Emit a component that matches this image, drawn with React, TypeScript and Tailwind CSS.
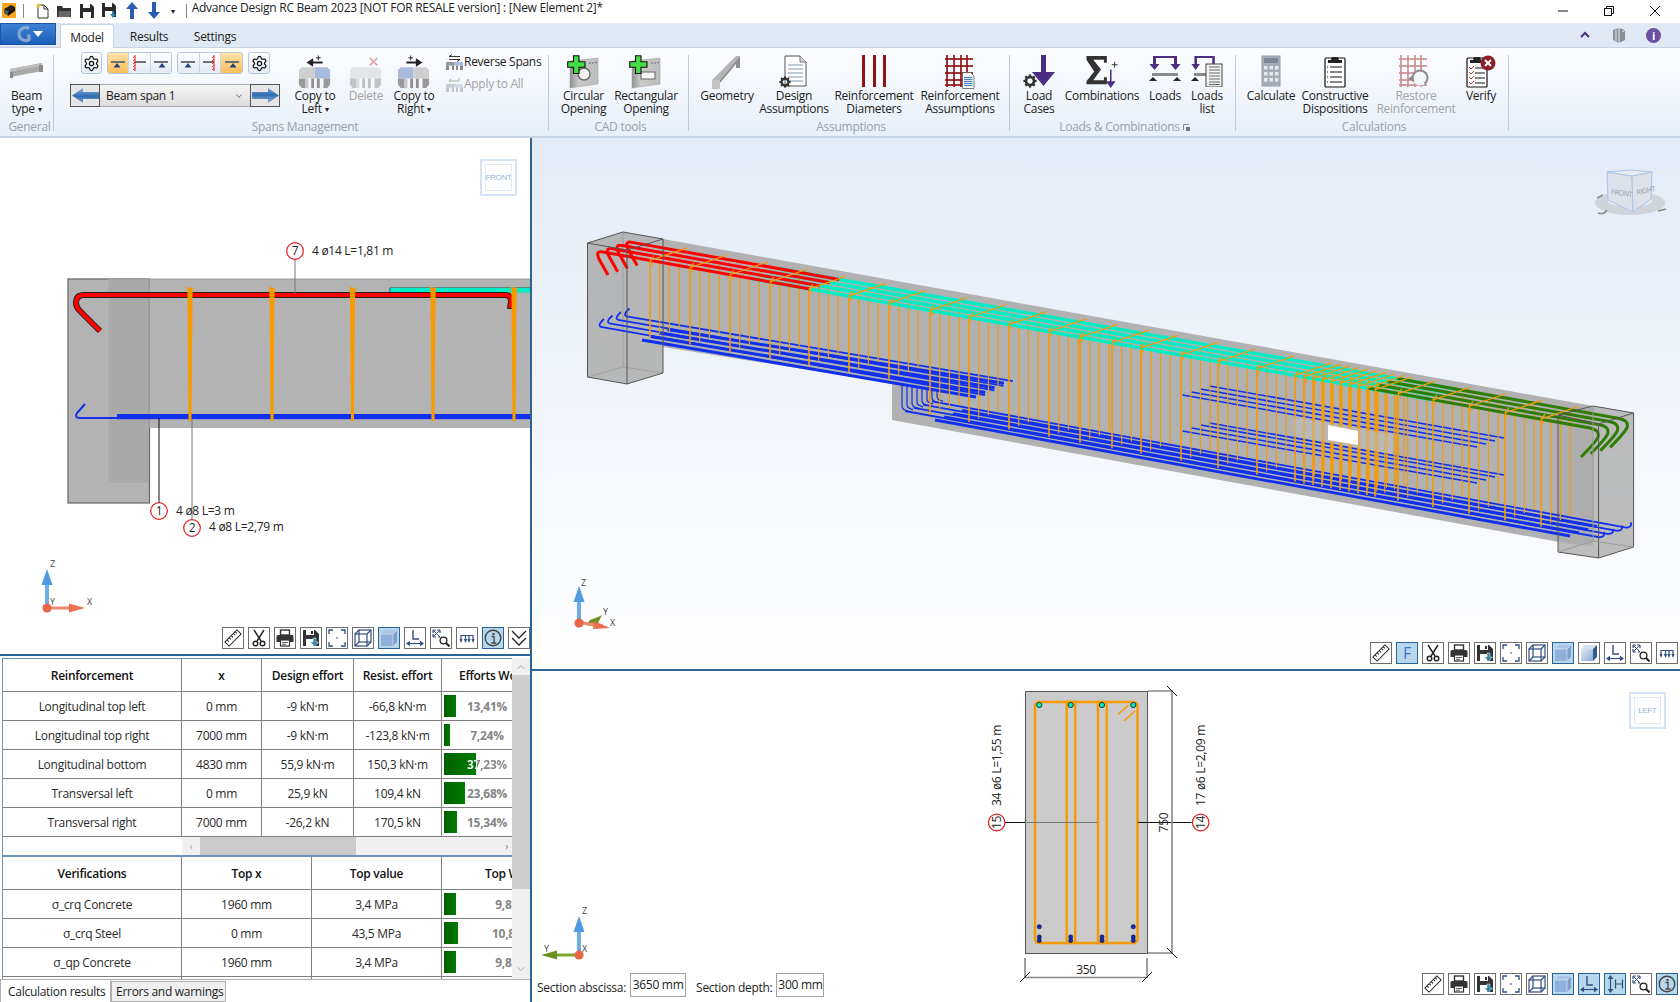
import React from "react";
import { Settings, ChevronDown } from "lucide-react";

const ORANGE = "#f79a00";
const BLUE = "#1030ee";
const CYAN = "#00ecc4";
const GREEN = "#2e7d00";
const PURPLE = "#4b2e83";

/* ---------- small ribbon icons ---------- */
const TableTop = ({ left, right }: { left: string; right: string }) => (
  <g>
    <polygon points="3,13 16.5,13 16.5,25 0,25 0,16" fill={left} />
    <polygon points="16.5,13 30,13 33,16 33,25 16.5,25" fill={right} />
    <polygon points="0,25 7,25 7,35 3,35 0,31" fill="#9a9a9a" />
    <rect x="7" y="25" width="3" height="10" fill="#c9c9c9" />
    <rect x="13" y="25" width="3" height="10" fill="#8f8f8f" />
    <rect x="19" y="25" width="3" height="10" fill="#8f8f8f" />
    <polygon points="26,25 33,25 33,31 30,35 26,35" fill="#9a9a9a" />
  </g>
);
const CopyLeft = () => (
  <svg width="34" height="34" viewBox="0 0 34 36">
    <polygon points="8,8 15,3.5 15,7 25,7 25,9 15,9 15,12.5" fill="#222" />
    <path d="M18 3h5M20.5 .5v5" stroke="#222" strokeWidth="1" />
    <TableTop left="#cfcfcf" right="#a9bbdd" />
  </svg>
);
const CopyRight = () => (
  <svg width="34" height="34" viewBox="0 0 34 36">
    <polygon points="26,8 19,3.5 19,7 9,7 9,9 19,9 19,12.5" fill="#222" />
    <path d="M11 3h5M13.5 .5v5" stroke="#222" strokeWidth="1" />
    <TableTop left="#a9bbdd" right="#cfcfcf" />
  </svg>
);
const DeleteSpan = () => (
  <svg width="34" height="34" viewBox="0 0 34 36" opacity="0.55">
    <path d="M21 3l8 8M29 3l-8 8" stroke="#c07070" strokeWidth="2" />
    <TableTop left="#d4d4d4" right="#d4d4d4" />
  </svg>
);
const Opening = ({ rect }: { rect?: boolean }) => (
  <svg width="34" height="34" viewBox="0 0 34 34">
    <defs>
      <linearGradient id="wall" x1="0" y1="0" x2="1" y2="0">
        <stop offset="0" stopColor="#8f8f8f" />
        <stop offset="0.3" stopColor="#c9c9c9" />
        <stop offset="1" stopColor="#bdbdbd" />
      </linearGradient>
    </defs>
    <polygon points="3,6 31,3 31,29 3,33" fill="url(#wall)" stroke="#9a9a9a" strokeWidth="0.5" />
    {rect ? (
      <rect x="12" y="17" width="14" height="7" fill="#f4f4f4" stroke="#666" strokeWidth="1" />
    ) : (
      <circle cx="17" cy="19" r="6" fill="#f4f4f4" stroke="#666" strokeWidth="1.4" />
    )}
    <circle cx="23" cy="8" r="0.8" fill="#666" />
    <circle cx="26" cy="8" r="0.8" fill="#666" />
    <circle cx="29" cy="7.5" r="0.8" fill="#666" />
    <path d="M6.5 .7h5.5v6h6v5.6h-6v6.2H6.5v-6.2H.7V6.7h5.8z" fill="#44dd44" stroke="#111" strokeWidth="1.1" />
  </svg>
);
const Geometry = () => (
  <svg width="30" height="34" viewBox="0 0 30 34">
    <polygon points="0,25 24,1 28,1 8,25" fill="#b5b5b5" />
    <polygon points="8,25 28,1 28,13 24,13 24,9 8,28" fill="#8f8f8f" />
    <polygon points="0,25 8,25 8,34 0,34" fill="#c2c2c2" />
  </svg>
);
const DocLines = ({ x = 0 }: { x?: number }) => (
  <g transform={`translate(${x} 0)`}>
    <path d="M5 1h15l6 6v24H5z" fill="#fff" stroke="#555" strokeWidth="1" />
    <path d="M20 1v6h6" fill="#ddd" stroke="#555" strokeWidth="0.8" />
    {[10, 14, 18, 22, 26].map((y) => (
      <path key={y} d={`M8 ${y}h15`} stroke="#7c93ad" strokeWidth="1" />
    ))}
  </g>
);
const Cog = ({ x, y, s = 1 }: { x: number; y: number; s?: number }) => (
  <g transform={`translate(${x} ${y}) scale(${s})`}>
    <circle r="4" fill="none" stroke="#333" strokeWidth="2.6" />
    {[0, 45, 90, 135, 180, 225, 270, 315].map((a) => (
      <rect key={a} x="-1.2" y="-6.6" width="2.4" height="3" fill="#333" transform={`rotate(${a})`} />
    ))}
  </g>
);
const DesignA = () => (
  <svg width="30" height="34" viewBox="0 0 30 34">
    <g transform="translate(1 0)">
      <DocLines />
    </g>
    <Cog x={6} y={27} s={0.85} />
  </svg>
);
const Diameters = () => (
  <svg width="26" height="32" viewBox="0 0 26 32">
    <rect x="1" y="0" width="3" height="32" fill="#8f1515" />
    <rect x="12" y="0" width="3" height="32" fill="#8f1515" />
    <rect x="22" y="0" width="3" height="32" fill="#8f1515" />
  </svg>
);
const RGrid = ({ c = "#8f1515" }: { c?: string }) => (
  <g stroke={c} strokeWidth="1.7">
    {[2, 9, 16, 22].map((x) => (
      <path key={x} d={`M${x} 0v32`} />
    ))}
    {[4, 11, 18, 25, 30].map((y) => (
      <path key={y} d={`M0 ${y}h28`} />
    ))}
  </g>
);
const RAssum = () => (
  <svg width="30" height="34" viewBox="0 0 30 34">
    <RGrid />
    <g transform="translate(17 17) scale(.5)">
      <path d="M1 1h16l7 7v25H1z" fill="#fff" stroke="#555" strokeWidth="1.6" />
      {[11, 15, 19, 23, 27].map((y) => (
        <path key={y} d={`M4 ${y}h17`} stroke="#4a80b8" strokeWidth="2.4" />
      ))}
    </g>
  </svg>
);
const LoadCases = () => (
  <svg width="34" height="34" viewBox="0 0 34 34">
    <path d="M19 0h5v17h9L21.5 31 10 17h9z" fill={PURPLE} />
    <Cog x={8} y={26} s={1} />
  </svg>
);
const Combos = () => (
  <svg width="34" height="35" viewBox="0 0 34 36">
    <path d="M1 1h21v7h-3V5H8l8 10-8 11h11v-3h3v7H1v-3l8-10L1 5z" fill="#333" />
    <path d="M27 10h6M30 7v6" stroke="#333" strokeWidth="1" />
    <path d="M26 15v15" stroke={PURPLE} strokeWidth="1.6" />
    <path d="M21 27h10l-5 7z" fill={PURPLE} />
  </svg>
);
const LoadFrame = ({ dx = 0 }: { dx?: number }) => (
  <g transform={`translate(${dx} 0)`} fill={PURPLE}>
    <path d="M5 1h22v2H5z" />
    <path d="M4 1h3v9H4zM25 1h3v9h-3z" />
    <path d="M.5 9h10l-5 6zM21.5 9h10l-5 6z" />
  </g>
);
const Loads = () => (
  <svg width="32" height="32" viewBox="0 0 32 32">
    <LoadFrame />
    <rect x="3" y="18" width="26" height="3" fill="#8a8a8a" />
    <path d="M0 26l4-4 4 4zM24 26l4-4 4 4z" fill="#222" />
  </svg>
);
const LoadsList = () => (
  <svg width="32" height="32" viewBox="0 0 32 32">
    <g transform="scale(.85 1)">
      <LoadFrame />
    </g>
    <rect x="3" y="18" width="14" height="3" fill="#8a8a8a" />
    <path d="M0 26l4-4 4 4z" fill="#222" />
    <rect x="15" y="9" width="16" height="23" fill="#f4f4f4" stroke="#444" />
    {[12, 15, 18, 21, 24, 27, 29.5].map((y) => (
      <path key={y} d={`M18 ${y}h11`} stroke="#666" strokeWidth="1" />
    ))}
  </svg>
);
const Calc = () => (
  <svg width="20" height="32" viewBox="0 0 20 32">
    <rect x="1" y="1" width="18" height="30" fill="#a7adb5" stroke="#96a0ac" />
    <rect x="3" y="3" width="14" height="5" fill="#7d8895" />
    {[11, 17, 23].flatMap((y) =>
      [3, 8.5, 14].map((x) => <rect key={`${x}-${y}`} x={x} y={y} width="3.5" height="3.5" fill="#e5e8ee" />)
    )}
  </svg>
);
const Clip = ({ children }: { children?: React.ReactNode }) => (
  <g>
    <rect x="1" y="3" width="20" height="29" rx="1" fill="#fff" stroke="#111" strokeWidth="1.2" />
    <path d="M4 8V5h3l1-3h6l1 3h3v3z" fill="#222" />
    {children}
  </g>
);
const Constructive = () => (
  <svg width="22" height="33" viewBox="0 0 22 33">
    <Clip>
      {[12, 17, 22, 27].map((y) => (
        <path key={y} d={`M6 ${y}h12M3 ${y}h1`} stroke="#111" strokeWidth="1" />
      ))}
    </Clip>
  </svg>
);
const Restore = () => (
  <svg width="34" height="34" viewBox="0 0 34 34">
    <g opacity="0.55">
      <RGrid c="#a33a3a" />
    </g>
    <circle cx="21" cy="23" r="7.5" fill="#f2f5fa" stroke="#8a8a8a" strokeWidth="2" strokeDasharray="34 13" transform="rotate(150 21 23)" />
    <path d="M9 24l5-4 1 6z" fill="#8a8a8a" />
  </svg>
);
const Verify = () => (
  <svg width="30" height="33" viewBox="0 0 30 33">
    <Clip>
      {[13, 18, 23, 28].map((y) => (
        <g key={y}>
          <path d={`M9 ${y}h10`} stroke="#111" strokeWidth="1" />
          <path d={`M3 ${y - 1}l2 2 3-3`} stroke="#c03030" strokeWidth="1" fill="none" />
        </g>
      ))}
    </Clip>
    <circle cx="22" cy="8" r="7.5" fill="#8a1f28" />
    <path d="M19 5l6 6M25 5l-6 6" stroke="#fff" strokeWidth="2" />
  </svg>
);
const BeamType = () => (
  <svg width="34" height="16" viewBox="0 0 34 16">
    <polygon points="0,6 32,0 32,8 1,14" fill="#a8a8a8" />
    <polygon points="0,6 32,0 32,3 0,9" fill="#bcbcbc" />
    <polygon points="0,9 3,9 3,15 0,15" fill="#8a8a8a" />
    <polygon points="29,2 33,2 33,9 29,9" fill="#8a8a8a" />
  </svg>
);
const MiniTable = ({ top, op = 1 }: { top: React.ReactNode; op?: number }) => (
  <svg width="17" height="16" viewBox="0 0 17 16" opacity={op}>
    {top}
    <rect x="0" y="8" width="17" height="3.5" fill="#a9bbdd" />
    <rect x="0" y="8" width="8" height="3.5" fill="#999" />
    <rect x="0" y="11.5" width="3" height="4.5" fill="#888" />
    <rect x="6" y="11.5" width="2" height="4.5" fill="#888" />
    <rect x="10" y="11.5" width="2" height="4.5" fill="#888" />
    <rect x="14" y="11.5" width="3" height="4.5" fill="#888" />
  </svg>
);

/* ---------- spans toolbar ---------- */
const SpanGlyph = ({ t, hatch }: { t?: number; hatch?: number }) => (
  <svg width="18" height="16" viewBox="0 0 18 16">
    <rect x={hatch === 5 ? 5 : 2} y="6" width={hatch ? 11 : 14} height="2" fill="#707070" />
    {t !== undefined && <path d={`M${t - 3.5} 12.5l3.5-4.5 3.5 4.5z`} fill="#23407e" />}
    {hatch !== undefined && (
      <g>
        <path d={`M${hatch} 0v16`} stroke="#e01818" strokeWidth="1" />
        {[1, 4, 7, 10, 13].map((y) => (
          <path key={y} d={`M${hatch} ${y}l-2 2`} stroke="#e01818" strokeWidth="0.8" />
        ))}
      </g>
    )}
  </svg>
);
const Seg = ({ active, children }: { active?: boolean; children: React.ReactNode }) => (
  <div
    className={`flex-1 h-full flex items-center justify-center ${
      active ? "bg-[linear-gradient(#ffe3a8,#fdbd5e)]" : "bg-[linear-gradient(#fdfeff,#e3ebf5)]"
    }`}
  >
    {children}
  </div>
);
const GearBtn = ({ w }: { w: string }) => (
  <div className={`${w} h-[22px] rounded-[3px] border border-[#b6c6d8] bg-[linear-gradient(#fdfeff,#e5edf6)] flex items-center justify-center`}>
    <Settings size={17} strokeWidth={1.7} color="#111" />
  </div>
);
const ArrowBtn = ({ right }: { right?: boolean }) => (
  <div className="w-[30px] h-[23px] border border-[#555] bg-[#e6e6e6] flex items-center justify-center">
    <svg width="27" height="15" viewBox="0 0 27 15" className={right ? "rotate-180" : ""}>
      <defs>
        <linearGradient id="arw" x1="0" y1="0" x2="0" y2="1">
          <stop offset="0" stopColor="#8fb5de" />
          <stop offset="0.55" stopColor="#2f6cb0" />
          <stop offset="1" stopColor="#7ba6d6" />
        </linearGradient>
      </defs>
      <path d="M0 7.5L11 0v4h16v7H11v4z" fill="url(#arw)" />
    </svg>
  </div>
);

/* ---------- ribbon pieces ---------- */
const Big = ({
  w,
  icon,
  lines,
  off,
  caret,
}: {
  w: string;
  icon: React.ReactNode;
  lines: string[];
  off?: boolean;
  caret?: boolean;
}) => (
  <div className={`${w} shrink-0 flex flex-col items-center pt-[7px]`}>
    <div className="h-[34px] flex items-start justify-center">{icon}</div>
    <div className={`text-center leading-[13px] whitespace-nowrap ${off ? "text-[#a3a3a3]" : "text-[#1c1c1c]"}`}>
      {lines.map((l, i) => (
        <div key={l}>
          {l}
          {caret && i === lines.length - 1 && <span className="text-[8px] ml-[3px] align-[1px]">▾</span>}
        </div>
      ))}
    </div>
  </div>
);
const Group = ({
  w,
  label,
  children,
  extra,
  lp = "pl-[4px]",
}: {
  w: string;
  label: string;
  children: React.ReactNode;
  extra?: React.ReactNode;
  lp?: string;
}) => (
  <div className={`${w} shrink-0 flex`}>
    <div className="flex-1 min-w-0 flex flex-col">
      <div className="h-[72px] flex">{children}</div>
      <div className={`h-[14px] flex items-center justify-center gap-[2px] leading-[14px] text-[#9aa1a8] whitespace-nowrap ${lp}`}>
        {label}
        {extra}
      </div>
    </div>
    <div className="w-px h-[76px] mt-[7px] bg-[#bccbdb] shrink-0" />
  </div>
);

/* ---------- viewport toolbar ---------- */
const C = "#2f4f80";
const Ico: Record<string, React.ReactNode> = {
  ruler: (
    <g transform="rotate(-45 9 9)" fill="none" stroke="#222" strokeWidth="1">
      <rect x="0.5" y="6" width="17" height="6" fill="#fff" />
      <path d="M3.5 6v2.5M6.5 6v2.5M9.5 6v2.5M12.5 6v2.5M15 6v2.5" />
    </g>
  ),
  cut: (
    <g fill="none" stroke="#222" strokeWidth="1.4">
      <path d="M4 1l7 11M14 1L7 12" />
      <circle cx="5.5" cy="14.5" r="2.3" />
      <circle cx="12.5" cy="14.5" r="2.3" />
    </g>
  ),
  print: (
    <g>
      <rect x="4.5" y="1" width="9" height="5" fill="#fff" stroke="#333" strokeWidth="1.4" />
      <path d="M2 6h14a1.5 1.5 0 0 1 1.5 1.5V13H14v-2H4v2H.5V7.5A1.5 1.5 0 0 1 2 6z" fill="#333" />
      <rect x="4.5" y="11" width="9" height="6" fill="#fff" stroke="#333" strokeWidth="1.2" />
      <path d="M6 13.5h6M6 15.3h4" stroke="#333" strokeWidth="0.8" />
    </g>
  ),
  save: (
    <g>
      <path d="M1 1h12l4 4v12H1z" fill="#333" />
      <rect x="4" y="1" width="8" height="5" fill="#fff" />
      <rect x="9" y="2" width="2" height="3" fill="#333" />
      <rect x="4" y="10" width="7" height="7" fill="#fff" />
      <path d="M11 9h3v4h2.5l-4 4.5-4-4.5H11z" fill="#2e86ab" stroke="#fff" strokeWidth="0.5" />
    </g>
  ),
  fit: (
    <g fill="none" stroke={C} strokeWidth="1.3">
      <path d="M1 5V1h4M13 1h4v4M17 13v4h-4M5 17H1v-4" />
      <rect x="8.3" y="8.3" width="1.4" height="1.4" fill={C} stroke="none" />
    </g>
  ),
  wire: (
    <g fill="none" stroke={C} strokeWidth="1.2">
      <rect x="1" y="5" width="12" height="12" />
      <rect x="5" y="1" width="12" height="12" />
      <path d="M1 5l4-4M13 5l4-4M1 17l4-4M13 17l4-4" />
    </g>
  ),
  solid: (
    <g>
      <rect x="1" y="5" width="12" height="12" fill="#8fb0da" />
      <polygon points="1,5 5,1 17,1 13,5" fill="#a9c4e4" />
      <polygon points="13,5 17,1 17,13 13,17" fill="#7c9ecb" />
      <path d="M13 5l4-4M1 5h12v12" stroke="#fff" strokeWidth="0.5" fill="none" />
    </g>
  ),
  solid2: (
    <g>
      <defs>
        <linearGradient id="sol2" x1="0" y1="0" x2="1" y2="1">
          <stop offset="0" stopColor="#e6edf6" />
          <stop offset="1" stopColor="#88a8d2" />
        </linearGradient>
      </defs>
      <rect x="1" y="5" width="12" height="12" fill="url(#sol2)" />
      <polygon points="1,5 5,1 17,1 13,5" fill="#d3dff0" />
      <polygon points="13,5 17,1 17,13 13,17" fill="#33588f" />
    </g>
  ),
  l: (
    <g>
      <path d="M7 1v9h6" fill="none" stroke={C} strokeWidth="1.4" />
      <path d="M3 14.5h12" stroke={C} strokeWidth="1.2" />
      <path d="M0 14.5l4-2.8v5.6zM18 14.5l-4-2.8v5.6z" fill={C} />
    </g>
  ),
  h: (
    <g>
      <path d="M4.5 3v12" stroke={C} strokeWidth="1.2" />
      <path d="M4.5 0l2.8 4H1.7zM4.5 18l2.8-4H1.7z" fill={C} />
      <path d="M9.5 4.5v9M16.5 4.5v9M9.5 9h7" fill="none" stroke={C} strokeWidth="1.2" />
    </g>
  ),
  zoom: (
    <g fill="none">
      <path d="M1 1l7 7M1 8l7-7" stroke={C} strokeWidth="1" />
      <path d="M1 1h3M1 1v3M8 1H5M8 1v3M1 8h3M1 8V5M8 8H6" stroke={C} strokeWidth="1.2" />
      <circle cx="11.5" cy="11.5" r="3.4" stroke="#222" strokeWidth="1.3" />
      <path d="M14 14l3.5 3.5" stroke="#222" strokeWidth="2" />
    </g>
  ),
  beam: (
    <g fill="none" stroke={C} strokeWidth="1.2">
      <path d="M3 6.5h12M3 6v6M7.5 6v6M11 6v6M15 6v6" />
      <path d="M2 10l1 2.5 1-2.5M6.5 10l1 2.5 1-2.5M10 10l1 2.5 1-2.5M14 10l1 2.5 1-2.5" />
    </g>
  ),
  info: (
    <g>
      <circle cx="9" cy="9" r="7.8" fill="none" stroke="#444" strokeWidth="1.4" />
      <path d="M7.5 7.5H10v6.2M7.3 14h5" fill="none" stroke="#444" strokeWidth="1.3" />
      <rect x="8.5" y="4" width="2" height="2" fill="#444" />
    </g>
  ),
  chev: (
    <g fill="none" stroke="#222" strokeWidth="1.3">
      <path d="M2 2l7 7 7-7M2 9l7 7 7-7" />
    </g>
  ),
};
const TB = ({ items }: { items: string[] }) => (
  <div className="flex gap-[4px]">
    {items.map((raw, i) => {
      const active = raw.endsWith("*");
      const k = raw.replace("*", "");
      return (
        <div
          key={i}
          className={`w-[22px] h-[22px] flex items-center justify-center border-[1.5px] ${
            active ? "border-[#2a6496] bg-[#b7d7ec]" : "border-[#6e6e6e] bg-white"
          }`}
        >
          {k === "F" ? (
            <span className="text-[16px] leading-none text-[#3f6fd0]">F</span>
          ) : (
            <svg width="18" height="18" viewBox="0 0 18 18">
              {Ico[k]}
            </svg>
          )}
        </div>
      );
    })}
  </div>
);

/* ---------- labels ---------- */
const Mark = ({ x, y, n }: { x: number; y: number; n: string }) => (
  <g>
    <circle cx={x} cy={y} r="8.3" fill="#fff" stroke="#e41c1c" strokeWidth="1.2" />
    <text x={x} y={y + 4.2} textAnchor="middle" fontSize="12" fill="#222">
      {n}
    </text>
  </g>
);
const Axis = ({ x, y, yLeft }: { x: number; y: number; yLeft?: boolean }) => (
  <g>
    <rect x={x - 2} y={y - 32} width="4" height="32" fill="#6eaee6" />
    <path d={`M${x} ${y - 39}l5.5 16h-11z`} fill="#4f9ae0" />
    {yLeft ? (
      <g>
        <rect x={x - 32} y={y - 1.5} width="32" height="3" fill="#7da62c" />
        <path d={`M${x - 38} ${y}l16-4.5v9z`} fill="#6b8f22" />
        <text x={x - 35} y={y - 3} fontSize="9" fill="#444">
          Y
        </text>
        <text x={x + 3} y={y - 3} fontSize="9" fill="#444">
          X
        </text>
      </g>
    ) : (
      <g>
        <rect x={x} y={y - 1.5} width="28" height="3" fill="#ee8a6e" />
        <path d={`M${x + 38} ${y}l-16-4.5v9z`} fill="#e8704f" />
        <text x={x + 40} y={y - 3} fontSize="9" fill="#444">
          X
        </text>
        <text x={x + 3} y={y - 3} fontSize="9" fill="#444">
          Y
        </text>
      </g>
    )}
    <text x={x + 3} y={y - 41} fontSize="9" fill="#444">
      Z
    </text>
    <circle cx={x} cy={y} r="4.6" fill="#e8654a" />
  </g>
);
const ViewCube = ({ label, top, right }: { label: string; top: string; right: string }) => (
  <div className={`absolute ${top} ${right} w-[37px] h-[37px] border-2 border-[#d5e3f4] bg-white flex items-center justify-center`}>
    <div className="absolute inset-[3px] border border-[#dfeaf6]" />
    <span className="text-[8px] leading-none text-[#95b3d8] font-['Liberation_Sans',sans-serif]">{label}</span>
  </div>
);

/* ---------- 2D elevation ---------- */
const Elevation = () => (
  <svg className="absolute inset-0" width="530" height="516" viewBox="0 138 530 516">
    <rect x="68" y="279" width="81.5" height="224" fill="#b3b3b3" stroke="#666" strokeWidth="1.2" />
    <rect x="149.5" y="279" width="381" height="149" fill="#b3b3b3" />
    <rect x="108.5" y="279" width="41" height="204" fill="#a9a9a9" />
    <path d="M149 279v149M108 279h422" stroke="#9a9a9a" strokeWidth="1" fill="none" />
    <path d="M149.5 428V503" stroke="#666" strokeWidth="1" />
    <path d="M390 293v-5h141" fill={CYAN} stroke="#0a5a50" strokeWidth="1" />
    <rect x="390.5" y="288" width="141" height="4.5" fill={CYAN} />
    <path d="M100 331L80 311Q76 307 76 303Q76 295 84 295H505Q511 295 511 301L510 309" fill="none" stroke="#222" strokeWidth="6" />
    <path d="M100 331L80 311Q76 307 76 303Q76 295 84 295H505Q511 295 511 301L510 308" fill="none" stroke="#ff0000" strokeWidth="4" />
    <path d="M85 404L77 413Q74 418 80 418H117" fill="none" stroke={BLUE} strokeWidth="2" />
    <rect x="117" y="414" width="414" height="5.2" fill={BLUE} />
    {[190, 272, 352.5, 433, 514].map((x) => (
      <polygon key={x} points={`${x - 3},287 ${x + 3},288 ${x + 2.5},296 ${x + 1.5},421 ${x - 1.5},421 ${x - 2.5},296`} fill={ORANGE} />
    ))}
    <path d="M159 418v85" stroke="#111" strokeWidth="1" />
    <path d="M192 419v100" stroke="#777" strokeWidth="1" />
    <path d="M295 259v35" stroke="#777" strokeWidth="1" />
    <Mark x={295} y={251} n="7" />
    <Mark x={159} y={511} n="1" />
    <Mark x={192} y={528} n="2" />
    <g fontSize="12" fill="#222">
      <text x="312" y="255">4 ø14 L=1,81 m</text>
      <text x="176" y="515">4 ø8 L=3 m</text>
      <text x="209" y="531">4 ø8 L=2,79 m</text>
    </g>
    <Axis x={47} y={608} />
  </svg>
);

/* ---------- 3D view ---------- */
const S = 0.178;
const DK = 9.7;
const DY = 3.2;
const topY = (x: number) => 289 + S * (x - 810);
const bot = (x: number) => (x < 892 ? 332 + 0.172 * (x - 617) : 410 + 0.183 * (x - 903));
const KS = [0, 1, 2, 3];
const STIR = [650, 690, 730, 770, 809, 849, 889, 930, 969, 1009, 1049, 1080, 1112, 1141, 1181, 1218, 1257, 1295, 1304, 1313, 1322, 1331, 1340, 1349, 1358, 1367, 1375, 1398, 1433, 1469, 1505, 1541];
const MIDS: [number, number, number, number][] = [
  [1182.5, 395, 1477, 447],
  [1191.5, 392, 1486, 444],
  [1200.5, 389, 1495, 441],
  [1209.5, 386, 1504, 438],
  [1182.5, 431, 1477, 483],
  [1191.5, 428, 1486, 480],
  [1200.5, 425, 1495, 477],
  [1209.5, 423, 1504, 475],
];
const Beam3D = () => (
  <svg className="absolute inset-0" width="1148" height="531" viewBox="532 138 1148 531">
    <polygon points="663,239 1593,406 1593,546 1570,544 892,420 892,383 663,347" fill="#b1b1b1" />
    {/* supports */}
    <polygon points="587.5,243 623,232 663,239 663,373 627,384 587.5,377" fill="#acacac" opacity="0.85" />
    <path d="M623 232V367M623 367L587.5 377M623 367L663 373" stroke="#9a9a9a" strokeWidth="0.8" fill="none" />
    <polygon points="1558,415 1593,406 1633.6,413 1633.6,547 1598.6,558 1558,552" fill="#acacac" opacity="0.8" />
    {/* bottom bars, span one */}
    {KS.map((k) => (
      <g key={k} fill="none" stroke={BLUE}>
        <path d={`M${604 + 8.5 * k} ${319 - 3.5 * k}Q${597 + 8.5 * k} ${325 - 3.5 * k} ${601 + 8.5 * k} ${327 - 3.5 * k}L${985 + 9.3 * k} ${395 - 4.6 * k}`} strokeWidth="1.8" />
        <path d={`M${642 + 8.5 * k} ${340 - 3.5 * k}L${976 + 9.3 * k} ${397 - 4.6 * k}`} strokeWidth="3" />
      </g>
    ))}
    {/* bent-up bars at the step */}
    {[0, 1, 2, 3, 4, 5, 6, 7].map((i) => (
      <path key={i} d={`M${902 + 5 * i} ${385 + i * 0.6}V${406 - i * 1.4}Q${902 + 5 * i} ${410 - i * 1.4} ${908 + 5 * i} ${411 - i * 1.4}`} fill="none" stroke={BLUE} strokeWidth="1.2" />
    ))}
    {/* bottom bars, span two */}
    {KS.map((k) => (
      <g key={k} fill="none" stroke={BLUE}>
        <path d={`M${905 + 9 * k} ${411 - 3.2 * k}L${1598 + 9 * k} ${537 - 3.2 * k}q7 1 6 -5`} strokeWidth="1.8" />
        <path d={`M${935 + 9 * k} ${420 - 3.2 * k}L${1570 + 9 * k} ${536 - 3.2 * k}`} strokeWidth="2.8" />
      </g>
    ))}
    {MIDS.map((m, i) => (
      <path key={i} d={`M${m[0]} ${m[1]}L${m[2]} ${m[3]}`} stroke={BLUE} strokeWidth="1.6" />
    ))}
    {/* stirrup legs */}
    {STIR.map((x) => (
      <g key={x} fill="none" stroke={ORANGE}>
        {KS.map((k) => (
          <path key={k} d={`M${x + DK * k} ${topY(x) - DY * k}V${bot(x) - 3.4 * k}`} strokeWidth={k === 0 ? 1.6 : 1.1} />
        ))}
      </g>
    ))}
    {/* top bars */}
    {KS.map((k) => (
      <path key={k} d={`M${750 + DK * k} ${topY(750) - DY * k}L${1431 + DK * k} ${topY(1431) - DY * k}`} stroke={CYAN} strokeWidth="3.4" />
    ))}
    {KS.map((k) => (
      <path
        key={k}
        d={`M${608 + DK * k} ${275 - DY * k}L${599 + DK * k} ${259 - DY * k}Q${595 + DK * k} ${250 - DY * k} ${603 + DK * k} ${252 - DY * k}L${810 + DK * k} ${289 - DY * k}`}
        fill="none"
        stroke="#ff0000"
        strokeWidth="3"
      />
    ))}
    {KS.map((k) => (
      <path
        key={k}
        d={`M${1368 + DK * k} ${388 - DY * k}L${1590 + DK * k} ${428 - DY * k}Q${1600 + DK * k} ${430 - DY * k} ${1598 + DK * k} ${437 - DY * k}Q${1596 + DK * k} ${442 - DY * k} ${1581 + DK * k} ${457 - DY * k}`}
        fill="none"
        stroke={GREEN}
        strokeWidth="3"
      />
    ))}
    {/* stirrup tops */}
    {STIR.map((x) => (
      <g key={x} fill="none" stroke={ORANGE}>
        <path d={`M${x} ${topY(x)}L${x + DK * 3 + 8} ${topY(x) - DY * 3 - 3}`} strokeWidth="1.2" />
        <path d={`M${x + 4} ${topY(x) - 5}L${x} ${topY(x)}L${x + 3} ${topY(x) + 5}`} strokeWidth="1.1" />
      </g>
    ))}
    {/* opening */}
    <polygon points="1294,417 1393,435 1393,454 1294,436" fill="#bdbdbd" opacity="0.55" />
    <polygon points="1328,425 1358,431 1358,445 1328,440" fill="#fff" />
    {/* support edges */}
    <g fill="none" strokeWidth="1">
      <path d="M587.5 243L623 232L663 239L627 250ZM587.5 243V377L627 384L663 373V239M627 250V384" stroke="#555" />
      <path d="M1558 415L1593 406L1633.6 413L1598.6 424ZM1558 415V552L1598.6 558L1633.6 547V413M1598.6 424V558" stroke="#555" />
      <path d="M1593 406V541L1558 552M1593 541L1633.6 547" stroke="#9a9a9a" />
    </g>
    {/* nav cube */}
    <ellipse cx="1630" cy="203" rx="35" ry="12" fill="#cfd4db" />
    <ellipse cx="1630" cy="201" rx="22" ry="6" fill="#e4eaf3" />
    <g fill="#dde2ea" stroke="#a9c6ea" strokeWidth="1">
      <polygon points="1607,172 1632,176 1633,212 1608,200" />
      <polygon points="1632,176 1652,172 1651,199 1633,212" />
      <polygon points="1607,172 1631,170 1652,172 1632,176" fill="#e6ebf2" />
    </g>
    <text x="1611" y="194" fontSize="7" fill="#8d97a6" transform="rotate(8 1611 194)">FRONT</text>
    <text x="1637" y="195" fontSize="7" fill="#8d97a6" transform="rotate(-12 1637 195)">RIGHT</text>
    <path d="M1597 198l6-3M1598 213q6 2 9-3M1658 211l8-2" stroke="#8a8a8a" strokeWidth="1.5" fill="none" />
    {/* axes */}
    <rect x="577" y="597" width="4" height="26" fill="#6eaee6" />
    <path d="M579 586l5.5 16h-11z" fill="#4f9ae0" />
    <polygon points="590,620 598,617 602,615 596,627 586,625" fill="#6b8f22" />
    <rect x="579" y="621" width="24" height="3" fill="#ee8a6e" transform="rotate(8 579 622)" />
    <path d="M610 628l-16-7-1 8z" fill="#e8704f" />
    <circle cx="579" cy="623" r="4.6" fill="#e8654a" />
    <g fontSize="9" fill="#444">
      <text x="581" y="586">Z</text>
      <text x="603" y="615">Y</text>
      <text x="610" y="626">X</text>
    </g>
  </svg>
);

/* ---------- cross section ---------- */
const SX = [1039.3, 1070.7, 1102, 1133.3];
const Section = () => (
  <svg className="absolute inset-0" width="1148" height="331" viewBox="532 671 1148 331">
    <rect x="1025.5" y="691.5" width="122" height="262" fill="#cbcbcb" stroke="#555" strokeWidth="1" />
    <g fill="none" stroke={ORANGE} strokeWidth="2.4">
      <rect x="1035" y="702" width="102.5" height="241" rx="4" />
      <rect x="1066.7" y="702" width="8.5" height="241" />
      <rect x="1098" y="702" width="8.7" height="241" />
      <path d="M1128.5 705L1118 714.5M1135 711L1124 721" strokeWidth="1.6" />
    </g>
    {SX.map((x) => (
      <circle key={x} cx={x} cy="705" r="2.6" fill={CYAN} stroke="#111" strokeWidth="0.8" />
    ))}
    {SX.map((x) => (
      <g key={x} fill="#1428b0" stroke="#111" strokeWidth="0.4">
        <circle cx={x} cy="937" r="2.2" />
        <circle cx={x} cy="940.5" r="2.2" />
      </g>
    ))}
    <circle cx={SX[0]} cy="926.7" r="2.2" fill="#1428b0" stroke="#111" strokeWidth="0.4" />
    <circle cx={SX[3]} cy="926.7" r="2.2" fill="#1428b0" stroke="#111" strokeWidth="0.4" />
    <path d="M1005 822.5h20M1137.7 822.5h54" stroke="#111" strokeWidth="1" />
    <path d="M1025 822.5h72" stroke="#777" strokeWidth="1" />
    <g fill="none" stroke="#888" strokeWidth="1.6">
      <path d="M1148 691h24V953h-24" />
      <path d="M1025 958v19.5h122V958" />
    </g>
    <path d="M1167 686l10 10M1167 948l10 10M1020 982l10-10M1142 982l10-10" stroke="#111" strokeWidth="1" />
    <circle cx="996.7" cy="822.5" r="8.3" fill="#fff" stroke="#e41c1c" strokeWidth="1.2" />
    <circle cx="1200.7" cy="822.5" r="8.3" fill="#fff" stroke="#e41c1c" strokeWidth="1.2" />
    <g fontSize="12" fill="#222" textAnchor="middle">
      <text transform="translate(1001 822.5) rotate(-90)">15</text>
      <text transform="translate(1205 822.5) rotate(-90)">14</text>
      <text transform="translate(1001 765.5) rotate(-90)">34 ø6 L=1,55 m</text>
      <text transform="translate(1205 765.5) rotate(-90)">17 ø6 L=2,09 m</text>
      <text transform="translate(1168 822.5) rotate(-90)">750</text>
      <text x="1086" y="974">350</text>
    </g>
    <Axis x={579} y={955} yLeft />
  </svg>
);

/* ---------- tables ---------- */
const Cell = ({ w, bold, children }: { w: string; bold?: boolean; children?: React.ReactNode }) => (
  <div className={`${w} shrink-0 h-full flex items-center justify-center pt-[2px] border-r border-b border-[#7f7f7f] whitespace-nowrap ${bold ? "font-semibold text-[#111]" : "text-[#2a2a2a]"}`}>
    {children}
  </div>
);
const Ratio = ({ w, bar, text, clip }: { w: string; bar: string; text: string; clip?: string }) => (
  <div className={`${w} shrink-0 h-full relative flex items-center justify-center pt-[2px] border-b border-[#7f7f7f]`}>
    <div className={`absolute left-[2px] top-[3px] h-[22px] bg-[linear-gradient(90deg,#005f00,#007c00)] ${bar}`} />
    <span className={`relative font-bold ${clip ?? "text-[#858585]"}`}>{text}</span>
  </div>
);
const R1: [string, string, string, string, string, string, string?][] = [
  ["Longitudinal top left", "0 mm", "-9 kN·m", "-66,8 kN·m", "w-[12px]", "13,41%"],
  ["Longitudinal top right", "7000 mm", "-9 kN·m", "-123,8 kN·m", "w-[6px]", "7,24%"],
  ["Longitudinal bottom", "4830 mm", "55,9 kN·m", "150,3 kN·m", "w-[32px]", "37,23%", "text-transparent bg-clip-text bg-[linear-gradient(90deg,#fff_10px,#858585_10px)]"],
  ["Transversal left", "0 mm", "25,9 kN", "109,4 kN", "w-[21px]", "23,68%"],
  ["Transversal right", "7000 mm", "-26,2 kN", "170,5 kN", "w-[13px]", "15,34%"],
];
const R2: [string, string, string, string, string][] = [
  ["σ_crq Concrete", "1960 mm", "3,4 MPa", "w-[12px]", "9,81%"],
  ["σ_crq Steel", "0 mm", "43,5 MPa", "w-[14px]", "10,84%"],
  ["σ_qp Concrete", "1960 mm", "3,4 MPa", "w-[12px]", "9,81%"],
];
const Tables = () => (
  <div className="h-[321px] shrink-0 flex">
    <div className="ml-[2px] w-[510px] overflow-hidden border-l border-t border-[#6f93b8] flex flex-col">
      <div className="flex h-[33px] shrink-0">
        <Cell w="w-[179px]" bold>Reinforcement</Cell>
        <Cell w="w-[80px]" bold>x</Cell>
        <Cell w="w-[92px]" bold>Design effort</Cell>
        <Cell w="w-[88px]" bold>Resist. effort</Cell>
        <Cell w="w-[104px]" bold>Efforts Work</Cell>
      </div>
      {R1.map((r) => (
        <div key={r[0]} className="flex h-[29px] shrink-0">
          <Cell w="w-[179px]">{r[0]}</Cell>
          <Cell w="w-[80px]">{r[1]}</Cell>
          <Cell w="w-[92px]">{r[2]}</Cell>
          <Cell w="w-[88px]">{r[3]}</Cell>
          <Ratio w="w-[90px]" bar={r[4]} text={r[5]} clip={r[6]} />
        </div>
      ))}
      <div className="flex h-[18px] shrink-0">
        <div className="w-[179px] shrink-0 bg-white" />
        <div className="flex-1 bg-[#f0f0f0] flex items-center">
          <span className="w-[18px] text-center text-[10px] text-[#a0a0a0]">‹</span>
          <div className="w-[156px] h-full bg-[#cbcbcb]" />
          <div className="flex-1 text-right pr-[4px] text-[10px] text-[#808080]">›</div>
        </div>
      </div>
      <div className="flex h-[35px] shrink-0 border-t-2 border-[#6f93b8]">
        <Cell w="w-[179px]" bold>Verifications</Cell>
        <Cell w="w-[130px]" bold>Top x</Cell>
        <Cell w="w-[130px]" bold>Top value</Cell>
        <Cell w="w-[140px]" bold>Top Work</Cell>
      </div>
      {R2.map((r) => (
        <div key={r[0]} className="flex h-[29px] shrink-0">
          <Cell w="w-[179px]">{r[0]}</Cell>
          <Cell w="w-[130px]">{r[1]}</Cell>
          <Cell w="w-[130px]">{r[2]}</Cell>
          <Ratio w="w-[140px]" bar={r[3]} text={r[4]} />
        </div>
      ))}
      <div className="flex h-[10px] shrink-0">
        <div className="w-[179px] shrink-0 border-r border-[#7f7f7f]" />
        <div className="w-[130px] shrink-0 border-r border-[#7f7f7f]" />
        <div className="w-[130px] shrink-0 border-r border-[#7f7f7f]" />
      </div>
    </div>
    <div className="w-[18px] bg-[#f0f0f0] flex flex-col items-center">
      <div className="h-[17px] flex items-center justify-center">
        <ChevronDown size={12} color="#a8a8a8" className="rotate-180" />
      </div>
      <div className="w-full h-[214px] bg-[#cdcdcd]" />
      <div className="flex-1" />
      <div className="h-[17px] flex items-center justify-center mb-[2px]">
        <ChevronDown size={12} color="#a8a8a8" />
      </div>
    </div>
  </div>
);

export default function App() {
  return (
    <div className="w-[1680px] h-[1002px] overflow-hidden bg-white flex flex-col text-[12px] text-[#1c1c1c] font-['Open_Sans','Noto_Sans',sans-serif] tracking-[-0.28px]">
      {/* title bar */}
      <div className="h-[23px] shrink-0 flex items-center bg-white pb-[2px]">
        <svg className="ml-[2px]" width="14" height="15" viewBox="0 0 14 15">
          <rect width="14" height="15" fill="#f7a81b" />
          <polygon points="2,6 9,2 13,4 6,9" fill="#222" />
          <polygon points="2,6 6,9 6,13 2,10" fill="#555" />
          <polygon points="6,9 13,4 13,8 6,13" fill="#111" />
        </svg>
        <div className="ml-[7px] w-px h-[14px] bg-[#888]" />
        <svg className="ml-[12px]" width="13" height="16" viewBox="0 0 13 16">
          <path d="M2 2h6l4 4v9H2z" fill="#fff" stroke="#333" />
          <path d="M8 2v4h4" fill="none" stroke="#333" />
          <circle cx="2.5" cy="2.5" r="2" fill="#e8c040" />
        </svg>
        <svg className="ml-[8px]" width="15" height="14" viewBox="0 0 15 14">
          <path d="M0 2h5l1 2h8v9H0z" fill="#333" />
          <path d="M2 7h12l-1 6H1z" fill="#666" />
        </svg>
        <svg className="ml-[8px]" width="14" height="14" viewBox="0 0 14 14">
          <path d="M0 0h11l3 3v11H0z" fill="#2b2b2b" />
          <rect x="3" y="0" width="7" height="4" fill="#fff" />
          <rect x="3" y="8" width="8" height="6" fill="#fff" />
        </svg>
        <svg className="ml-[8px]" width="15" height="15" viewBox="0 0 15 15">
          <path d="M0 0h11l3 3v11H0z" fill="#2b2b2b" />
          <rect x="3" y="0" width="7" height="4" fill="#fff" />
          <rect x="3" y="8" width="7" height="6" fill="#fff" />
          <path d="M10 8h2v3h2l-3 4-3-4h2z" fill="#2e86ab" />
        </svg>
        <svg className="ml-[9px]" width="12" height="17" viewBox="0 0 12 17">
          <path d="M6 0l6 7H8v10H4V7H0z" fill="#2a5db0" />
        </svg>
        <svg className="ml-[10px]" width="12" height="17" viewBox="0 0 12 17">
          <path d="M6 17l6-7H8V0H4v10H0z" fill="#2a5db0" />
        </svg>
        <span className="ml-[11px] text-[8px]">▾</span>
        <div className="ml-[11px] w-px h-[14px] bg-[#888]" />
        <span className="ml-[5px] -mt-[6px] text-[#222]">Advance Design RC Beam 2023 [NOT FOR RESALE version] : [New Element 2]*</span>
        <div className="ml-auto flex pr-[2px]">
          <div className="w-[46px] flex justify-center">
            <svg width="12" height="12" viewBox="0 0 12 12"><path d="M1 6h10" stroke="#111" /></svg>
          </div>
          <div className="w-[46px] flex justify-center">
            <svg width="12" height="12" viewBox="0 0 12 12" fill="none" stroke="#111"><rect x="1.5" y="3.5" width="7" height="7" /><path d="M3.5 3V1.5h7v7H9" /></svg>
          </div>
          <div className="w-[46px] flex justify-center">
            <svg width="12" height="12" viewBox="0 0 12 12"><path d="M1 1l10 10M11 1L1 11" stroke="#111" /></svg>
          </div>
        </div>
      </div>

      {/* tab row */}
      <div className="h-[24px] shrink-0 bg-[#dfe8f3] flex items-end">
        <div className="w-[56px] h-[22px] mb-[2px] border border-[#1d58a8] bg-[linear-gradient(#3c80d6,#1c5fb8)] flex items-center justify-center">
          <svg width="36" height="18" viewBox="0 0 36 18">
            <path d="M19 3.5A6.5 6.5 0 1 0 19 14.5V9.5" fill="none" stroke="#86a7d2" strokeWidth="3.4" />
            <path d="M23 6h10l-5 6z" fill="#fff" />
          </svg>
        </div>
        <div className="ml-[4px] w-[54px] h-[24px] -mb-px pt-[3px] relative bg-white border border-b-0 border-[#c5d3e2] rounded-t-[3px] flex items-center justify-center">Model</div>
        <div className="w-[70px] h-[24px] pt-[4px] flex items-center justify-center">Results</div>
        <div className="w-[62px] h-[24px] pt-[4px] flex items-center justify-center">Settings</div>
        <div className="ml-auto h-[24px] flex items-center">
          <svg width="10" height="8" viewBox="0 0 10 8"><path d="M1 6l4-4 4 4" fill="none" stroke={PURPLE} strokeWidth="2" /></svg>
          <svg className="ml-[22px]" width="14" height="16" viewBox="0 0 14 16">
            <path d="M1 3l6-2 6 2v10l-6 3-6-3z" fill="#8a8f96" />
            <path d="M7 1v15M4 3v11M10 5l3-2" stroke="#e4eaf3" />
          </svg>
          <div className="ml-[20px] mr-[19px] w-[15px] h-[15px] rounded-full bg-[#6a4fa3] text-white flex items-center justify-center text-[11px] font-bold leading-none">i</div>
        </div>
      </div>

      {/* ribbon */}
      <div className="h-[91px] shrink-0 flex border-t border-b-2 border-[#c5d3e2] bg-[linear-gradient(#fcfdff,#e7eff8)]">
        <Group w="w-[54px]" label="General" lp="pl-[6px]">
          <Big w="w-[53px]" icon={<div className="pt-[8px]"><BeamType /></div>} lines={["Beam", "type"]} caret />
        </Group>
        <Group w="w-[495px]" label="Spans Management" lp="pl-[8px]">
          <div className="w-[236px] shrink-0 pl-[16px] pt-[4px]">
            <div className="flex items-center ml-[11px] gap-[5px]">
              <GearBtn w="w-[21px]" />
              <div className="w-[65px] h-[22px] flex rounded-[3px] overflow-hidden border border-[#b6c6d8] divide-x divide-[#c5d3e2]">
                <Seg active><SpanGlyph t={8} /></Seg>
                <Seg><SpanGlyph hatch={5} /></Seg>
                <Seg><SpanGlyph t={10} /></Seg>
              </div>
              <div className="w-[66px] h-[22px] flex rounded-[3px] overflow-hidden border border-[#b6c6d8] divide-x divide-[#c5d3e2]">
                <Seg><SpanGlyph t={9} /></Seg>
                <Seg><SpanGlyph hatch={13} /></Seg>
                <Seg active><SpanGlyph t={10} /></Seg>
              </div>
              <GearBtn w="w-[22px]" />
            </div>
            <div className="flex mt-[10px]">
              <ArrowBtn />
              <div className="w-[150px] h-[23px] border-y border-[#aaa] bg-[linear-gradient(#f6f6f6,#dcdcdc)] flex items-center pl-[6px] pr-[6px]">
                <span>Beam span 1</span>
                <ChevronDown size={10} className="ml-auto" color="#555" />
              </div>
              <ArrowBtn right />
            </div>
          </div>
          <Big w="w-[50px]" icon={<CopyLeft />} lines={["Copy to", "Left"]} caret />
          <Big w="w-[52px]" icon={<DeleteSpan />} lines={["Delete"]} off />
          <Big w="w-[44px]" icon={<CopyRight />} lines={["Copy to", "Right"]} caret />
          <div className="pl-[10px] pt-[6px] flex flex-col gap-[6px]">
            <div className="h-[16px] flex items-center gap-[1px]">
              <MiniTable top={<path d="M3 2.5h11M3 5.5h11M3 2.5l3-2M14 5.5l-3 2" stroke="#333" strokeWidth="1" fill="none" />} />
              <span>Reverse Spans</span>
            </div>
            <div className="h-[16px] flex items-center gap-[1px] text-[#a3a3a3]">
              <MiniTable op={0.45} top={<path d="M3 5h10V2M3 5l2-2" stroke="#555" strokeWidth="1" fill="none" />} />
              <span>Apply to All</span>
            </div>
          </div>
        </Group>
        <Group w="w-[140px]" label="CAD tools">
          <div className="w-[5px]" />
          <Big w="w-[59px]" icon={<Opening />} lines={["Circular", "Opening"]} />
          <Big w="w-[66px]" icon={<Opening rect />} lines={["Rectangular", "Opening"]} />
        </Group>
        <Group w="w-[321px]" label="Assumptions">
          <div className="w-[8px]" />
          <Big w="w-[60px]" icon={<Geometry />} lines={["Geometry"]} />
          <div className="w-[2px]" />
          <Big w="w-[70px]" icon={<DesignA />} lines={["Design", "Assumptions"]} />
          <div className="w-[3px]" />
          <Big w="w-[84px]" icon={<Diameters />} lines={["Reinforcement", "Diameters"]} />
          <div className="w-[2px]" />
          <Big w="w-[84px]" icon={<RAssum />} lines={["Reinforcement", "Assumptions"]} />
        </Group>
        <Group
          w="w-[226px]"
          label="Loads & Combinations"
          extra={
            <svg width="7" height="7" viewBox="0 0 7 7" className="ml-[1px]">
              <path d="M.5 6V.5H6" fill="none" stroke="#8a8a8a" />
              <rect x="3" y="3" width="4" height="4" fill="#777" />
            </svg>
          }
        >
          <div className="w-[9px]" />
          <Big w="w-[40px]" icon={<LoadCases />} lines={["Load", "Cases"]} />
          <div className="w-[5px]" />
          <Big w="w-[76px]" icon={<Combos />} lines={["Combinations"]} />
          <div className="w-[8px]" />
          <Big w="w-[34px]" icon={<Loads />} lines={["Loads"]} />
          <div className="w-[7px]" />
          <Big w="w-[36px]" icon={<LoadsList />} lines={["Loads", "list"]} />
        </Group>
        <Group w="w-[273px]" label="Calculations">
          <div className="w-[9px]" />
          <Big w="w-[52px]" icon={<Calc />} lines={["Calculate"]} />
          <div className="w-[3px]" />
          <Big w="w-[70px]" icon={<Constructive />} lines={["Constructive", "Dispositions"]} />
          <div className="w-[6px]" />
          <Big w="w-[80px]" icon={<Restore />} lines={["Restore", "Reinforcement"]} off />
          <div className="w-[5px]" />
          <Big w="w-[40px]" icon={<Verify />} lines={["Verify"]} />
        </Group>
      </div>

      {/* work area */}
      <div className="flex-1 min-h-0 flex">
        <div className="w-[532px] shrink-0 border-r-2 border-[#2a6496] flex flex-col">
          <div className="h-[518px] shrink-0 relative border-b-2 border-[#2a6496] flex flex-col justify-end pb-[5px]">
            <Elevation />
            <ViewCube label="FRONT" top="top-[21px]" right="right-[13px]" />
            <div className="relative flex justify-end">
              <TB items={["ruler", "cut", "print", "save", "fit", "wire", "solid*", "l", "zoom", "beam", "info*", "chev"]} />
            </div>
          </div>
          <div className="h-[2px] shrink-0" />
          <Tables />
          <div className="flex-1 flex items-start border-t border-[#b0b0b0]">
            <div className="w-[111px] h-[24px] border-x border-b border-[#b0b0b0] bg-white pl-[7px] flex items-center">Calculation results</div>
            <div className="w-[115px] h-[21px] mt-px border border-[#b0b0b0] bg-[#f0f0f0] pl-[4px] flex items-center">Errors and warnings</div>
          </div>
        </div>
        <div className="flex-1 min-w-0 flex flex-col">
          <div className="h-[533px] shrink-0 relative border-b-2 border-[#2a6496] bg-[linear-gradient(#e3ebf6,#ffffff)] flex flex-col justify-end pb-[5px]">
            <Beam3D />
            <div className="relative flex justify-end pr-[2px]">
              <TB items={["ruler", "F*", "cut", "print", "save", "fit", "wire", "solid*", "solid2", "l", "zoom", "beam"]} />
            </div>
          </div>
          <div className="flex-1 min-h-0 relative flex flex-col justify-end">
            <Section />
            <ViewCube label="LEFT" top="top-[21px]" right="right-[14px]" />
            <div className="relative h-[29px] flex items-start pl-[5px] pr-[2px]">
              <span className="mt-[6px]">Section abscissa:</span>
              <div className="ml-[4px] w-[56px] h-[24px] border border-[#a3a3a3] flex items-center justify-center">3650 mm</div>
              <span className="ml-[10px] mt-[6px]">Section depth:</span>
              <div className="ml-[4px] w-[48px] h-[24px] border border-[#a3a3a3] flex items-center justify-center">300 mm</div>
              <div className="ml-auto">
                <TB items={["ruler", "print", "save", "fit", "wire", "solid*", "l*", "h*", "zoom", "info*"]} />
              </div>
            </div>
          </div>
        </div>
      </div>
    </div>
  );
}
